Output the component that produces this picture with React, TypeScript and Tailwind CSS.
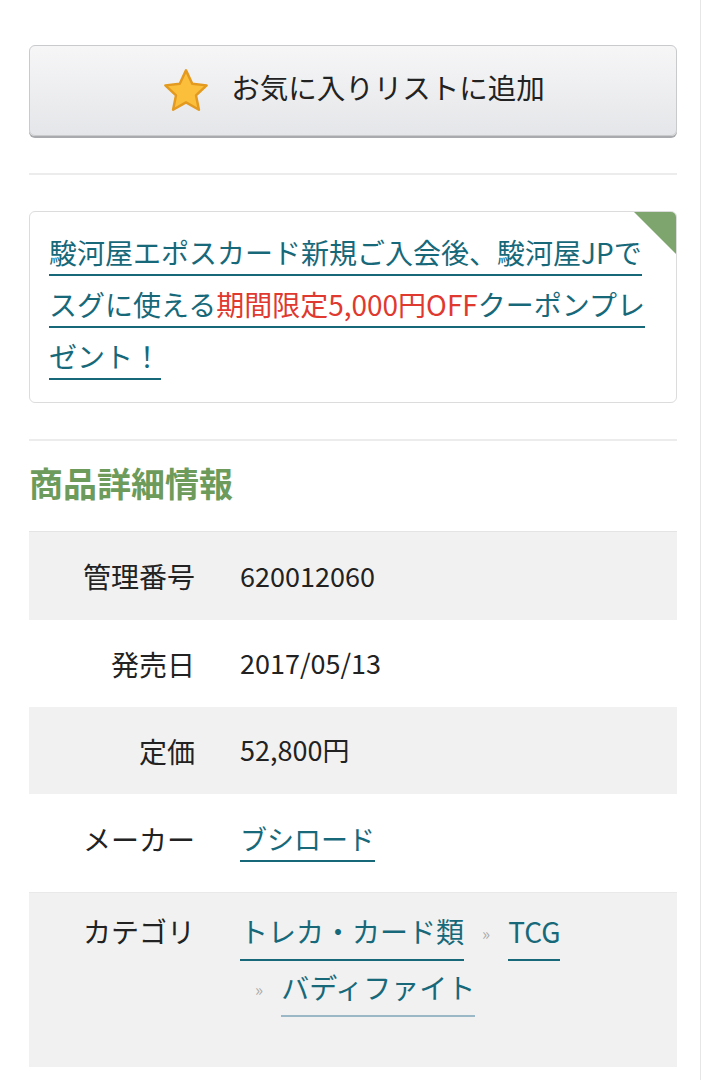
const jp = { fontFamily: '"Noto Sans CJK JP", "Noto Sans", sans-serif' };

function Star() {
  return (
    <svg width="50" height="48" viewBox="0 0 24 23" aria-hidden>
      <path
        d="M12 1.6l3 6.4 6.9.8-5.1 4.8 1.4 6.9L12 17l-6.2 3.5 1.4-6.9L2.1 8.8 9 8z"
        fill="#fbbf3c"
        stroke="#e39a1f"
        strokeWidth="1.2"
        strokeLinejoin="round"
      />
    </svg>
  );
}

function Link({ children }: { children: React.ReactNode }) {
  return (
    <span className="text-[#17697a] border-b-2 border-[#17697a] pb-[2px]">{children}</span>
  );
}

const rows: { label: string; value: React.ReactNode; gray: boolean; h: string }[] = [
  { label: '管理番号', value: '620012060', gray: true, h: 'h-[88px]' },
  { label: '発売日', value: '2017/05/13', gray: false, h: 'h-[87px]' },
  { label: '定価', value: '52,800円', gray: true, h: 'h-[87px]' },
  { label: 'メーカー', value: <Link>ブシロード</Link>, gray: false, h: 'h-[98px] pb-[8px]' },
];

export default function App() {
  return (
    <div className="w-[701px] min-h-[1080px] bg-white border-r border-[#e6e6e6]" style={jp}>
      <div className="px-[29px] pt-[45px] w-[705px] pr-[28px]">
        <button className="w-full h-[91px] flex items-center justify-center gap-[20px] rounded-[6px] border border-[#c9cacc] bg-gradient-to-b from-[#f6f6f7] to-[#e5e6e9] shadow-[0_2px_0_#a9aaad] text-[28.5px] text-[#222]">
          <Star />
          <span className="-mt-[6px]">お気に入りリストに追加</span>
        </button>

        <div className="mt-[37px] h-[2px] bg-[#ececec]" />

        <div className="relative mt-[36px] border border-[#dcdcdc] rounded-[6px] bg-white pl-[19px] pr-[16px] pt-[14px] pb-[20px] overflow-hidden">
          <div className="absolute top-0 right-0 w-0 h-0 border-t-[42px] border-l-[42px] border-t-[#7fa56f] border-l-transparent" />
          <p className="text-[28px] leading-[52px] text-[#17697a]">
            <span className="border-b-2 border-[#17697a] pb-[2px]">
              駿河屋エポスカード新規ご入会後、駿河屋JPでスグに使える
              <span className="text-[#e0392f]">期間限定5,000円OFF</span>
              クーポンプレゼント！
            </span>
          </p>
        </div>

        <div className="mt-[36px] h-[2px] bg-[#ececec]" />

        <h2 className="mt-[19px] text-[34px] leading-[46px] font-bold text-[#6d9b5b]">商品詳細情報</h2>

        <div className="mt-[25px] border-t border-[#e4e4e4]">
          {rows.map((r) => (
            <div
              key={r.label}
              className={`flex items-center ${r.h} text-[27px] text-[#222] ${r.gray ? 'bg-[#f1f1f1]' : 'bg-white'}`}
            >
              <div className="w-[166px] text-right text-[28px]">{r.label}</div>
              <div className="pl-[45px]">{r.value}</div>
            </div>
          ))}
          <div className="flex bg-[#f1f1f1] h-[175px] pt-[12px] text-[28px] leading-[52px] text-[#222] border-t border-[#e9e9e9]">
            <div className="w-[166px] text-right shrink-0">カテゴリ</div>
            <div className="pl-[45px] w-[440px]">
              <div className="flex items-center">
                <Link>トレカ・カード類</Link>
                <span className="text-[#aaa] text-[17px] mx-[18px]">»</span>
                <Link>TCG</Link>
              </div>
              <div className="flex items-center pl-[15px]">
                <span className="text-[#aaa] text-[17px] mr-[18px]">»</span>
                <span className="text-[#17697a] border-b-2 border-[#9bb8c6] pb-[2px]">バディファイト</span>
              </div>
            </div>
          </div>
        </div>
      </div>
    </div>
  );
}
